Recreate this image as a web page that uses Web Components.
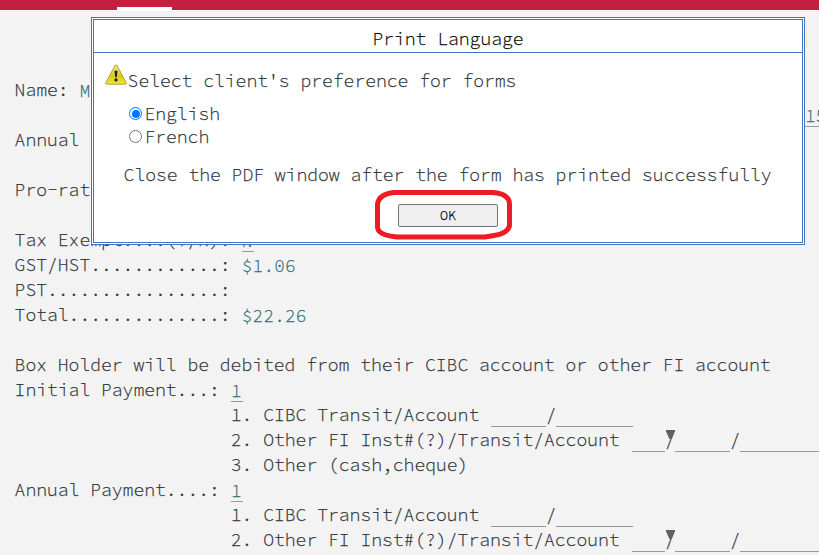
<!DOCTYPE html>
<html lang="en">
<head>
<meta charset="utf-8">
<title>Print Language</title>
<style>
html, body { margin: 0; height: 100%; overflow: hidden; background: #f3f3f3; }
body { font-family: "Source Code Pro", "Noto Sans Mono CJK SC", "DejaVu Sans Mono", monospace; font-size: 18px; font-weight: 300; -webkit-text-stroke: .25px currentColor; color: #2c3237; }
</style>
</head>
<body>
<terminal-page></terminal-page>
<script>
const define = (name, html) => customElements.define(name, class extends HTMLElement {
  constructor() {
    super();
    const t = document.createElement('template');
    t.innerHTML = html;
    this.attachShadow({ mode: 'open' }).append(t.content.cloneNode(true));
  }
});

define('app-bar', `<style>
:host { display: flex; height: 10px; background: #c41f3e; border-bottom: 1px solid #fff; align-items: flex-end; padding-left: 117px; box-sizing: content-box; }
i { width: 55px; height: 3px; background: #fff; }
</style><i></i>`);

define('form-row', `<style>
:host { display: flex; height: 25px; line-height: 23px; white-space: pre; }
:host([indent]) { padding-left: 216.2px; }
</style><slot></slot>`);

define('form-value', `<style>
:host { display: block; box-sizing: border-box; height: 24px; line-height: 27px; margin-left: .4px; color: #2b6b76; -webkit-text-stroke-color: #2b6b76; font-size: 17.6px; letter-spacing: .24px; }
:host([line]) { border-bottom: 1px solid #999; width: 12px; }
</style><slot></slot>`);

customElements.define('form-blank', class extends HTMLElement {
  constructor() {
    super();
    this.attachShadow({ mode: 'open' }).innerHTML = `<style>
:host { display: block; box-sizing: border-box; flex: none; height: 24px; border-bottom: 1px solid #999; width: ${this.getAttribute('w')}px; }
</style>`;
  }
});

define('form-slash', `<style>
:host { display: block; position: relative; width: 10px; flex: none; text-indent: -.3px; }
:host([menu])::before { content: ""; position: absolute; left: 1px; top: 2px; width: 9px; height: 9px; background: #5c6163; clip-path: polygon(0 0, 100% 0, 100% 15%, 62% 100%, 38% 100%, 0 15%); z-index: 1; }
</style>/`);

define('payment-options', `<style>
:host { display: block; }
form-blank.a { margin-left: 1px; } form-blank.b { margin-left: 1.6px; }
</style>
<form-row indent>1. CIBC Transit/Account <form-blank class="a" w="55"></form-blank><form-slash></form-slash><form-blank w="77"></form-blank></form-row>
<form-row indent>2. Other FI Inst#(?)/Transit/Account <form-blank class="b" w="33"></form-blank><form-slash menu></form-slash><form-blank w="55"></form-blank><form-slash></form-slash><form-blank w="90"></form-blank></form-row>
<slot></slot>`);

define('warning-icon', `<style>
:host { display: block; width: 22px; height: 21px; margin: -1px .6px 0 0; } svg { display: block; }
</style><svg width="22" height="21" viewBox="0 0 22 21"><defs><linearGradient id="g" x2="0" y2="1"><stop stop-color="#eee78a"/><stop offset=".5" stop-color="#ddd32c"/><stop offset=".52" stop-color="#d3c916"/><stop offset="1" stop-color="#f0e733"/></linearGradient></defs><path d="M11 .8Q11.7.8 12.2 1.8L21.2 18.8Q21.8 20.2 20.5 20.2H1.5Q.2 20.2.8 18.8L9.8 1.8Q10.3.8 11 .8Z" fill="url(#g)" stroke="#aaa33b"/><path d="M9.4 7.2Q11 5.8 12.6 7.2L11.7 13.3H10.3Z" fill="#17202b"/><circle cx="11" cy="15.9" r="1.6" fill="#17202b"/></svg>`);

define('radio-option', `<style>
:host { display: flex; height: 23px; line-height: 23px; align-items: center; }
b { width: 13px; height: 13px; box-sizing: border-box; border: 1px solid #767676; border-radius: 50%; background: #fff; margin-right: 2.4px; display: grid; place-items: center; }
:host([checked]) b { border-color: #0075ff; }
:host([checked]) b::after { content: ""; width: 8px; height: 8px; border-radius: 50%; background: #0075ff; }
</style><b></b><slot></slot>`);

define('ok-button', `<style>
:host { display: block; position: relative; width: 100px; height: 23px; }
button { display: block; width: 100%; height: 100%; box-sizing: border-box; padding: 0; border: 1px solid #767676; border-radius: 2px; background: #efefef; color: #000; font: inherit; font-size: 13.33px; font-weight: 300; -webkit-text-stroke: .25px #000; line-height: 21px; }
svg { position: absolute; left: -23px; top: -14px; overflow: visible; }
</style><button><slot></slot></button>
<svg width="137" height="50"><path d="M19 2.5H118Q134.5 4 134.5 14V36Q132 44 119 45.5L110 47H22Q2.5 45 2.5 37V14Q4 4 19 2.5Z" fill="none" stroke="#ed1c24" stroke-width="5"/></svg>`);

define('modal-dialog', `<style>
:host { display: flex; flex-direction: column; position: absolute; left: 91px; top: 17px; width: 714px; height: 228px; box-sizing: border-box; border: 3px double #4472c4; background: #fff; z-index: 5; }
header { height: 32px; border-bottom: 1px solid #4472c4; text-align: center; line-height: 37px; color: #000; -webkit-text-stroke-color: #000; }
main { display: flex; flex-direction: column; padding: 12px 0 0 11px; }
.prompt { display: flex; height: 31px; line-height: 31px; }
.options { padding: 6px 0 0 24px; }
.note { padding: 14px 0 0 18.6px; line-height: 25px; height: 26px; white-space: nowrap; }
.actions { padding: 16px 0 0 293px; }
</style>
<header><slot name="title"></slot></header>
<main><div class="prompt"><warning-icon></warning-icon><slot name="prompt"></slot></div>
<div class="options"><slot></slot></div><div class="note"><slot name="note"></slot></div><div class="actions"><slot name="action"></slot></div></main>`);

define('terminal-page', `<style>
:host { display: block; position: relative; width: 819px; height: 555px; overflow: hidden; background: #f3f3f3; }
main { padding: 67px 0 0 14.6px; }
.flag { position: absolute; left: 806px; top: 35px; width: 1px; height: 12px; background: #f7e5ab; }
</style>
<app-bar></app-bar><span class="flag"></span>
<main>
<form-row>Name: <form-value>M</form-value></form-row>
<form-row><form-value line style="margin-left:790.4px;width:29px">15</form-value></form-row>
<form-row>Annual</form-row>
<form-row></form-row>
<form-row>Pro-rat</form-row>
<form-row></form-row>
<form-row>Tax Exempt....(Y/N): <form-value line>N</form-value></form-row>
<form-row>GST/HST............: <form-value>$1.06</form-value></form-row>
<form-row>PST................:</form-row>
<form-row>Total..............: <form-value>$22.26</form-value></form-row>
<form-row></form-row>
<form-row>Box Holder will be debited from their CIBC account or other FI account</form-row>
<form-row>Initial Payment...: <form-value line>1</form-value></form-row>
<payment-options><form-row indent>3. Other (cash,cheque)</form-row></payment-options>
<form-row>Annual Payment....: <form-value line>1</form-value></form-row>
<payment-options></payment-options>
</main>
<modal-dialog><span slot="title">Print Language</span><span slot="prompt">Select client's preference for forms</span>
<radio-option checked>English</radio-option><radio-option>French</radio-option>
<span slot="note">Close the PDF window after the form has printed successfully</span><ok-button slot="action">OK</ok-button></modal-dialog>`);
</script>
</body>
</html>
